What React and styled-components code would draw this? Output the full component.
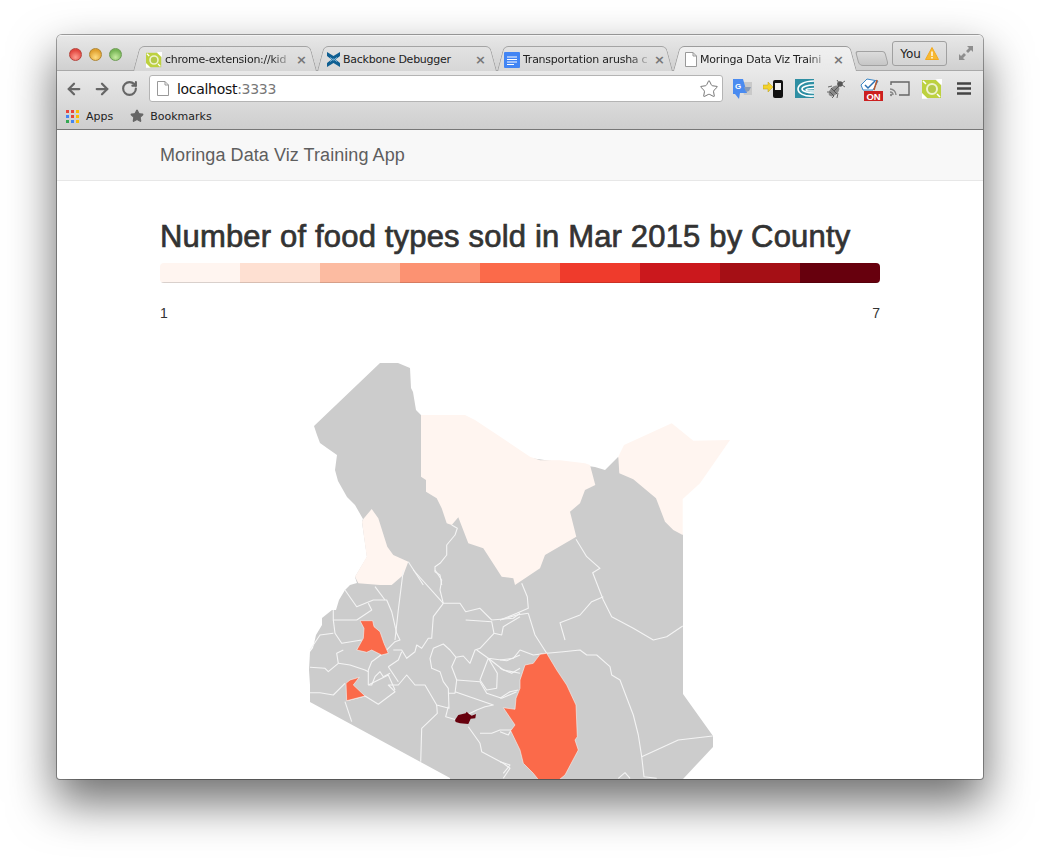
import React from "react";
import styled, { createGlobalStyle, css } from "styled-components";
import { ArrowLeft, ArrowRight, RotateCw, Star } from "lucide-react";

const GlobalStyle = createGlobalStyle`
    html, body {
        margin: 0;
        padding: 0;
        background: #fff;
        overflow: hidden;
    }
`;

const Page = styled.div`
    width: 1040px;
    height: 858px;
    padding: 35px 0 0 57px;
    box-sizing: border-box;
    overflow: hidden;
`;

const Browser = styled.div`
    width: 926px;
    height: 744px;
    border-radius: 5px 5px 3px 3px;
    overflow: hidden;
    background: #fff;
    box-shadow: 0 22px 46px 2px rgba(0,0,0,0.56), 0 0 0 1px rgba(0,0,0,0.35);
`;

const Chrome = styled.div`
    height: 95px;
    box-sizing: border-box;
    background: linear-gradient(#e9e9e9 36px, #cecece 94px);
    border-bottom: 1px solid #777;
`;

const TitleBar = styled.div`
    position: relative;
    height: 36px;
    display: flex;
    align-items: flex-end;
    border-bottom: 1px solid #a9a9a9;
    box-sizing: border-box;
    background: linear-gradient(#e8e8e8, #d0d0d0);
    box-shadow: inset 0 1px 0 #f4f4f4;
`;

const Lights = styled.div`
    display: flex;
    gap: 7px;
    align-self: flex-start;
    margin: 13px 0 0 12px;
    width: 64px;
`;

const Light = styled.span`
    width: 13px;
    height: 13px;
    border-radius: 50%;
    box-sizing: border-box;
    border: 1px solid ${p => p.$edge};
    background: radial-gradient(circle at 50% 75%, ${p => p.$glow} 0, ${p => p.$color} 70%);
`;

const Tabs = styled.div`
    display: flex;
    align-items: flex-end;
    height: 25px;
    margin-bottom: -1px;
`;

const TabShape = css`
    content: "";
    position: absolute;
    top: 0;
    bottom: 0;
    width: 60%;
    box-sizing: border-box;
    border-top: 1px solid ${p => (p.$active ? "#9c9c9c" : "#a4a4a4")};
    background: ${p => (p.$active
        ? "linear-gradient(#f0f0f0, #e9e9e9)"
        : "linear-gradient(#e2e2e2, #d6d6d6)")};
`;

const Tab = styled.div`
    position: relative;
    width: ${p => p.$width}px;
    height: 25px;
    box-sizing: border-box;
    display: flex;
    align-items: center;
    padding: 2px ${p => p.$padEnd}px 0 ${p => p.$pad}px;
    gap: 2px;
    z-index: ${p => (p.$active ? 2 : 1)};
    font: 11px "DejaVu Sans", sans-serif;
    letter-spacing: -0.25px;
    color: #222;

    &::before {
        ${TabShape}
        left: 0;
        border-left: 1px solid #a4a4a4;
        border-radius: 5px 0 0 0;
        transform: skewX(-15deg);
        transform-origin: bottom;
    }
    &::after {
        ${TabShape}
        right: 0;
        border-right: 1px solid #a4a4a4;
        border-radius: 0 5px 0 0;
        transform: skewX(15deg);
        transform-origin: bottom;
    }
    & > * {
        position: relative;
        z-index: 1;
    }
`;

const TabTitle = styled.span`
    flex: 1;
    min-width: 0;
    white-space: nowrap;
    overflow: hidden;
    margin-left: 1px;
    mask-image: ${p => (p.$fade ? "linear-gradient(to right, #000 82%, transparent 100%)" : "none")};
`;

const TabClose = styled.span`
    width: 10px;
    font: bold 13px "DejaVu Sans", sans-serif;
    line-height: 12px;
    color: #777;
    text-align: center;
`;

const NewTab = styled.div`
    width: 30px;
    height: 15px;
    margin: 0 0 5px 0;
    border: 1px solid #a2a2a2;
    border-radius: 3px 3px 4px 4px;
    background: linear-gradient(#dcdcdc, #c6c6c6);
    transform: skewX(15deg);
    box-sizing: border-box;
`;

const UserButton = styled.div`
    position: absolute;
    left: 835px;
    top: 6px;
    width: 55px;
    height: 25px;
    box-sizing: border-box;
    display: flex;
    align-items: center;
    justify-content: center;
    gap: 4px;
    border: 1px solid #a0a0a0;
    border-radius: 3px;
    font: 12px "DejaVu Sans", sans-serif;
    color: #222;
    background: linear-gradient(#e2e2e2, #d4d4d4);
`;

const FullScreen = styled.svg`
    position: absolute;
    left: 901px;
    top: 10px;
`;

const ToolBar = styled.div`
    height: 33px;
    box-sizing: border-box;
    display: flex;
    align-items: center;
    padding: 2px 0 0 8px;
`;

const NavButton = styled.span`
    display: flex;
    width: 28px;
    color: #666;
`;

const AddressBar = styled.div`
    width: 574px;
    height: 27px;
    box-sizing: border-box;
    display: flex;
    align-items: center;
    padding: 0 3px 0 7px;
    background: #fff;
    border: 1px solid #b4b4b4;
    border-radius: 3px;
    font: 14px "DejaVu Sans", sans-serif;
    letter-spacing: -0.3px;
    color: #111;
`;

const Url = styled.span`
    flex: 1;
    margin-left: 8px;
`;

const Port = styled.span`
    color: #777;
`;

const Ext = styled.svg`
    flex: none;
    margin-left: ${p => p.$gap}px;
`;

const BookmarkBar = styled.div`
    height: 25px;
    display: flex;
    align-items: center;
    padding: 0 0 1px 9px;
    box-sizing: border-box;
    font: 11px "DejaVu Sans", sans-serif;
    color: #222;
`;

const Bookmark = styled.span`
    display: flex;
    align-items: center;
    gap: ${p => p.$gap}px;
    margin-right: 17px;
`;

const NavBar = styled.div`
    height: 51px;
    box-sizing: border-box;
    padding: 0 103px;
    display: flex;
    align-items: center;
    background: #f8f8f8;
    border-bottom: 1px solid #e7e7e7;
    font: 18px "Liberation Sans", Arial, sans-serif;
    letter-spacing: 0.07px;
    color: #5e5e5e;
`;

const Main = styled.div`
    padding: 0 103px;
`;

const Heading = styled.h2`
    margin: 37px 0 7px;
    font: 500 31px/38px "Liberation Sans", Arial, sans-serif;
    letter-spacing: 0.17px;
    -webkit-text-stroke: 0.7px #333;
    color: #333;
    white-space: nowrap;
`;

const Legend = styled.div`
    display: flex;
    height: 20px;
    border-radius: 4px;
    overflow: hidden;
`;

const LegendStep = styled.div`
    flex: 1;
    box-shadow: inset 0 -1px 0 rgba(0,0,0,0.15);
    background: ${p => p.$color};
`;

const LegendLabels = styled.div`
    display: flex;
    justify-content: space-between;
    margin-top: 20px;
    font: 14px/20px "Liberation Sans", Arial, sans-serif;
    color: #333;
`;

const MapFrame = styled.svg`
    display: block;
    margin-top: 17px;
`;

const COLORS = ["#fff5f0", "#fee0d2", "#fcbba1", "#fc9272", "#fb6a4a", "#ef3b2c", "#cb181d", "#a50f15", "#67000d"];
const GREY = "#cccccc";
const LINE = "#f4f4f4";

// coordinates were read off 3x crops, so convert them back to page pixels
const pts = (ox, oy, s) =>
    s.trim().split(/\s+/).map(p => {
        const [x, y] = p.split(",").map(Number);
        return `${(ox + x / 3).toFixed(1)},${(oy + y / 3).toFixed(1)}`;
    }).join(" ");

const Z3 = [300, 355];
const Z4 = [500, 420];
const Z5 = [300, 570];
const Z6 = [500, 600];

const KENYA = "380,363 398,363 410,368 411,388 413,392 416,410 421,415 530,458 595,467 605,470 618,457 640,470 683,535 683,694 713,736 713,747 683,779 683,790 450,790 450,778 310,702 310,685 309,670 310,652 313,648 316,635 322,625 322,618 332,610 336,610 339,600 345,590 350,585 357,583 355,577 367,557 362,522 363,519 355,505 347,497 338,481 335,470 337,455 327,448 320,443 317,435 314,426";

const PALE = [
    pts(...Z3, "363,180 495,180 525,195 690,305 720,316 780,316 855,325 870,330 886,390 855,405 840,445 810,470 829,545 735,600 720,640 645,690 640,670 605,665 550,580 505,565 475,487 455,510 440,505 425,460 410,430 378,410 378,375 363,365"),
    pts(...Z4, "355,110 372,75 515,10 580,62 690,60 600,190 548,237 548,345 520,330 495,305 468,235 400,178 358,160"),
    pts(...Z3, "190,492 215,462 235,490 262,575 280,600 325,620 310,660 275,690 240,690 175,685 165,665 200,605 186,500"),
];

const ORANGE = [
    pts(...Z6, "140,160 120,163 100,190 75,195 60,240 60,265 48,295 45,328 10,323 45,375 32,392 60,450 70,490 100,520 120,545 170,545 195,525 235,450 225,420 232,410 228,315 200,255 170,210"),
    pts(...Z5, "180,152 218,152 222,170 240,185 252,220 265,250 245,255 215,240 200,247 170,240 190,205 192,175"),
    pts(...Z5, "178,322 160,345 195,378 140,392 138,340 150,330"),
];

const DARK = pts(...Z5, "465,450 475,435 497,430 500,425 507,432 515,437 528,432 526,445 512,446 505,462 480,460 467,456");

const BORDERS = [
    pts(...Z3, "325,620 370,690"),
    pts(...Z3, "455,510 472,520 465,540 440,570 440,600 420,625 405,635 405,650 420,660 425,690"),
    ...[
        "340,0 430,100 480,100 497,125 540,115 575,150 640,145 660,130",
        "405,0 425,30 420,60 430,100",
        "497,150 575,155 582,190 605,195 610,170 660,140",
        "430,100 400,140 395,205 385,205 365,235 350,225 345,245 320,265 305,240 280,240",
        "582,190 540,235 525,240 510,280 490,258 468,262 450,240 430,222 400,235 390,265 395,295 420,305 430,335 445,355 447,415 410,405 375,345 345,345 320,315 295,345 265,345 285,365 235,403 195,378",
        "530,240 565,265 620,272 660,255",
        "565,265 540,330 560,360 590,355 592,310 565,265",
        "565,265 610,300 660,310",
        "468,262 455,290 470,330 465,370 447,370",
        "470,330 540,335 560,370 605,385 650,365",
        "465,365 580,405 555,410 530,420 470,450 437,440 445,410",
        "410,405 412,430 365,475 362,575",
        "505,470 540,520 545,545 610,580 630,595 610,625",
        "540,490 575,490 600,480 635,480",
        "135,60 170,110 220,90 260,90 275,125 290,190 300,210 285,215 250,250 215,275 205,300 205,345",
        "310,0 295,120 285,210",
        "225,50 255,90",
        "205,100 215,120 170,150 100,150 100,120",
        "100,150 105,190 125,220 185,210",
        "30,240 60,195 100,190",
        "130,240 110,250 115,280 85,305 75,295 30,292",
        "115,280 150,285 195,300 205,305",
        "30,368 60,368 100,375 135,340",
        "135,395 155,455",
        "205,345 265,315 285,360",
        "265,290 295,270 305,245",
        "265,290 295,335",
        "205,345 215,345 225,320 240,305 250,320 270,310",
        "140,392 195,378",
    ].map(s => pts(...Z5, s)),
    ...[
        "85,40 105,105 140,160 190,155 240,150 260,165 290,165 330,200 335,225 360,240 375,280 400,345 415,405 425,470 432,530 470,535",
        "0,60 50,45 85,40",
        "425,470 535,420 638,408",
        "0,180 40,175 60,150 100,165 140,160",
        "355,535 375,518 390,535",
        "0,205 35,220 60,205",
        "0,295 30,275 55,270",
        "0,395 25,405 32,392",
        "0,485 30,495 10,520",
    ].map(s => pts(...Z6, s)),
    ...[
        "228,358 260,410 300,445 278,458 310,540 335,590 400,625 460,660 500,650 548,618",
        "310,530 275,545 240,585 180,608 195,660",
        "65,490 82,530 85,565 50,580 0,600",
    ].map(s => pts(...Z4, s)),
];

const TinyPage = () => (
    <svg width="12" height="15" viewBox="0 0 12 15">
        <path d="M.5.5H8L11.5 4V14.5H.5Z M8 .5V4H11.5" fill="#fff" stroke="#999" />
    </svg>
);

const PongIcon = ({ size = 16, gap }) => (
    <Ext $gap={gap || 0} width={size} height={size} viewBox="0 0 20 20">
        <rect y="1" width="19" height="18" fill="#bdd13f" />
        <circle cx="10" cy="10" r="5" fill="#b4c94a" stroke="#eef2cf" strokeWidth="2" />
        <path d="M15 1l5-1-1 5zM0 15l4 4H0zM1 2l3 3M15 15l3 3" stroke="#fff" strokeWidth="1.600" fill="#fff" />
    </Ext>
);

const BackboneIcon = () => (
    <svg width="13" height="15" viewBox="0 0 13 15">
        <path d="M0 0L6.500 4 13 0V4L8.500 7.500 13 11V15L6.500 11 0 15V11L4.500 7.500 0 4Z" fill="#0f5f92" />
        <path d="M3 5.500L6.500 8 10 5.500M3 9.500L6.500 7 10 9.500" fill="none" stroke="#7fb8d8" strokeWidth="1" />
    </svg>
);

const DocsIcon = () => (
    <svg width="16" height="16" viewBox="0 0 16 16">
        <rect width="16" height="16" rx="1" fill="#4285f4" />
        <path d="M3 5H13M3 7.500H13M3 10H13M3 12.500H10" stroke="#fff" strokeWidth="1" />
    </svg>
);

const TABS = [
    { title: "chrome-extension://kid", width: 184, pad: 13, padEnd: 11, fade: true, icon: <PongIcon /> },
    { title: "Backbone Debugger", width: 180, pad: 10, padEnd: 12, icon: <BackboneIcon /> },
    { title: "Transportation arusha c", width: 176, pad: 7, padEnd: 9, fade: true, icon: <DocsIcon /> },
    { title: "Moringa Data Viz Traini", width: 184, pad: 12, padEnd: 14, fade: true, active: true, icon: <TinyPage /> },
];

const App = () => (
    <Page>
        <GlobalStyle />
        <Browser>
            <Chrome>
                <TitleBar>
                    <Lights>
                        <Light $color="#e2463f" $glow="#ff9d90" $edge="#b5443c" />
                        <Light $color="#e0a02f" $glow="#ffdc80" $edge="#b08632" />
                        <Light $color="#76b555" $glow="#c6eca0" $edge="#6e9c55" />
                    </Lights>
                    <Tabs>
                        {TABS.map(t => (
                            <Tab key={t.title} $width={t.width} $pad={t.pad} $padEnd={t.padEnd} $active={t.active}>
                                {t.icon}
                                <TabTitle $fade={t.fade}>{t.title}</TabTitle>
                                <TabClose>×</TabClose>
                            </Tab>
                        ))}
                        <NewTab />
                    </Tabs>
                    <UserButton>
                        You
                        <svg width="14" height="13" viewBox="0 0 14 13">
                            <path d="M7 .5L13.500 12.500H.5Z" fill="#f7b932" stroke="#f2a91f" strokeLinejoin="round" />
                            <path d="M7 4.500V9M7 10V11.500" stroke="#fff" strokeWidth="1.400" />
                        </svg>
                    </UserButton>
                    <FullScreen width="16" height="16" viewBox="0 0 16 16">
                        <path d="M9 1H15V7L13 5 10 8 8 6 11 3ZM1 9V15H7L5 13 8 10 6 8 3 11Z" fill="#8e8e8e" />
                    </FullScreen>
                </TitleBar>
                <ToolBar>
                    <NavButton><ArrowLeft size={18} strokeWidth={3} /></NavButton>
                    <NavButton><ArrowRight size={18} strokeWidth={3} /></NavButton>
                    <NavButton><RotateCw size={17} strokeWidth={3} /></NavButton>
                    <AddressBar>
                        <TinyPage />
                        <Url>localhost<Port>:3333</Port></Url>
                        <Star size={20} strokeWidth={1.2} color="#777" fill="#fff" />
                    </AddressBar>
                    <Ext $gap={9} width="20" height="20" viewBox="0 0 20 20">
                        <path d="M9 3H20V16H12Z" fill="#c9c9c9" />
                        <path d="M1 0H11L15 14H8L7 20 3 15H1Z" fill="#4a8bf0" />
                        <text x="3" y="10" fontSize="8" fontWeight="bold" fontFamily="Liberation Sans" fill="#fff">G</text>
                        <path d="M12 8H19L17 12 14 13Z" fill="#8a9bb5" />
                    </Ext>
                    <Ext $gap={11} width="22" height="20" viewBox="0 0 22 20">
                        <path d="M0 6H5V3L10 8 5 13V10H0Z" fill="#f3d22b" stroke="#b79d1c" strokeWidth=".5" />
                        <rect x="10" y="1" width="10" height="18" rx="2" fill="#111" />
                        <rect x="12" y="4" width="6" height="7" fill="#eee" />
                    </Ext>
                    <Ext $gap={10} width="19" height="19" viewBox="0 0 19 19">
                        <rect width="19" height="19" fill="#2f8fa3" />
                        <path d="M19 2C9 2 3 6 3 10S9 18 19 17M19 6C12 6 7 8 7 10S12 14 19 14M19 9.500C15 9.500 11 10 11 11S15 12 19 12" fill="none" stroke="#fff" strokeWidth="1.600" />
                    </Ext>
                    <Ext $gap={12} width="20" height="20" viewBox="0 0 20 20">
                        <ellipse cx="8" cy="12" rx="4" ry="6.500" transform="rotate(45 8 12)" fill="#8a8a8a" />
                        <path d="M8 12L15 5M5 9L11 15M4 13L8 17" stroke="#555" strokeWidth="1" />
                        <circle cx="14" cy="5" r="2.800" fill="#555" />
                        <path d="M2 8L6 7M1 13H4M6 19L8 17M11 19L12 14M11 1L13 4M19 2L16 4M19 8L16 6" stroke="#666" strokeWidth="1" />
                    </Ext>
                    <Ext $gap={13} width="24" height="24" viewBox="0 0 24 24" style={{ marginTop: 3 }}>
                        <path d="M2 7L8 1 19 3 14 12H4Z" fill="#fff" stroke="#3b87c6" strokeWidth="1" />
                        <path d="M6 7L9 10 16 3" fill="none" stroke="#2b6fb0" strokeWidth="1.500" />
                        <path d="M18 2L15 12" stroke="#b8562b" strokeWidth="1.500" />
                        <rect x="5" y="13" width="19" height="10" fill="#cc1f1f" />
                        <text x="14.500" y="21.500" textAnchor="middle" fontSize="9.500" fontWeight="bold" fontFamily="Liberation Sans" fill="#fff">ON</text>
                    </Ext>
                    <Ext $gap={7} width="20" height="16" viewBox="0 0 20 16">
                        <path d="M1 4V1H19V14H9" fill="none" stroke="#666" strokeWidth="1.400" />
                        <path d="M0 8A6 6 0 0 1 6 14M0 11A3 3 0 0 1 3 14" fill="none" stroke="#888" strokeWidth="1.400" />
                        <circle cx="1" cy="14" r="1.200" fill="#888" />
                    </Ext>
                    <PongIcon size={20} gap={12} />
                    <Ext $gap={15} width="14" height="13" viewBox="0 0 14 13">
                        <path d="M0 1.500H14M0 6.500H14M0 11.500H14" stroke="#444" strokeWidth="2.600" />
                    </Ext>
                </ToolBar>
                <BookmarkBar>
                    <Bookmark $gap={7}>
                        <svg width="13" height="13" viewBox="0 0 13 13">
                            {["#e8453c", "#e8453c", "#fbbc05", "#4285f4", "#e8453c", "#fbbc05", "#34a853", "#4285f4", "#fbbc05"].map((c, i) => (
                                <rect key={i} x={(i % 3) * 5} y={Math.floor(i / 3) * 5} width="3" height="3" fill={c} />
                            ))}
                        </svg>
                        Apps
                    </Bookmark>
                    <Bookmark $gap={6}>
                        <Star size={14} color="#666" fill="#666" />
                        Bookmarks
                    </Bookmark>
                </BookmarkBar>
            </Chrome>
            <NavBar>Moringa Data Viz Training App</NavBar>
            <Main>
                <Heading>Number of food types sold in Mar 2015 by County</Heading>
                <Legend>
                    {COLORS.map(c => <LegendStep key={c} $color={c} />)}
                </Legend>
                <LegendLabels>
                    <span>1</span>
                    <span>7</span>
                </LegendLabels>
                <MapFrame width="720" height="440" viewBox="160 340 720 440">
                    <polygon points={KENYA} fill={GREY} />
                    {PALE.map((p, i) => <polygon key={i} points={p} fill={COLORS[0]} />)}
                    {BORDERS.map((p, i) => (
                        <polyline key={i} points={p} fill="none" stroke={LINE} strokeWidth="1.100" strokeLinejoin="round" />
                    ))}
                    {ORANGE.map((p, i) => <polygon key={i} points={p} fill={COLORS[4]} stroke={LINE} strokeWidth="0.6" />)}
                    <polygon points={DARK} fill={COLORS[8]} />
                </MapFrame>
            </Main>
        </Browser>
    </Page>
);

export default App;
